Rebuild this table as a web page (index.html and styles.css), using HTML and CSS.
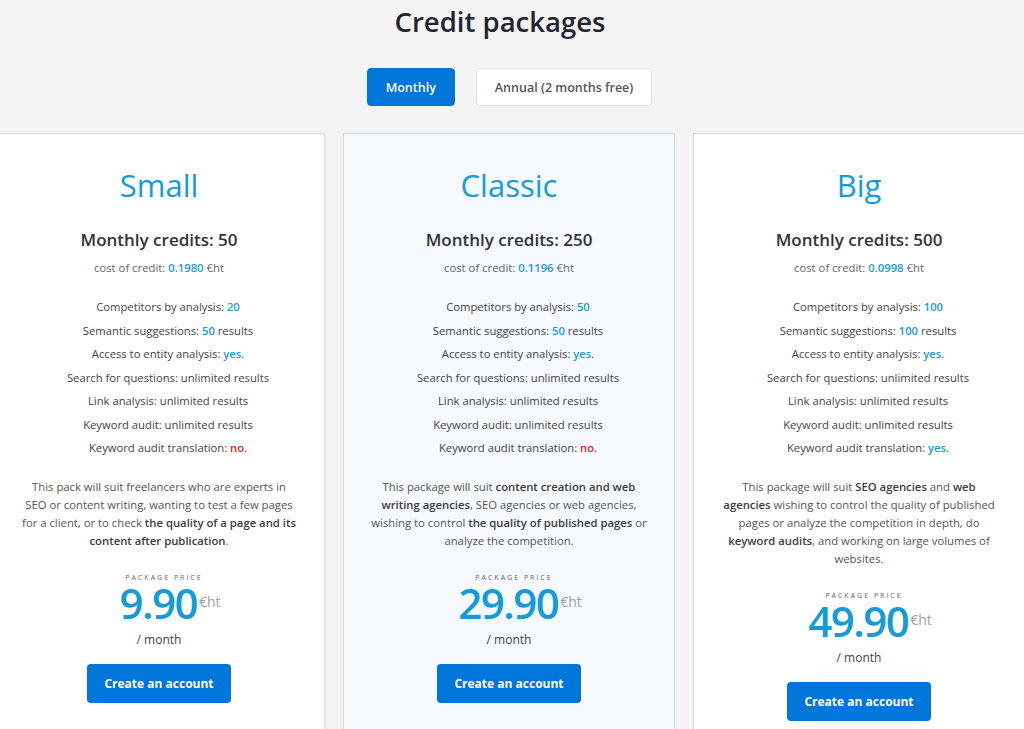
FILE: index.html
```html
<!DOCTYPE html>
<html lang="en">
<head>
  <meta charset="UTF-8" />
  <meta name="viewport" content="width=device-width, initial-scale=1.0" />
  <title>Credit packages</title>
  <link rel="stylesheet" href="styles.css">
</head>
<body>
  <h1 class="page-title">Credit packages</h1>

  <div class="period-toggle">
    <button class="period-btn active">Monthly</button>
    <button class="period-btn">Annual (2 months free)</button>
  </div>

  <div class="packages">
    <div class="package">
      <h2>Small</h2>
      <div class="credits">Monthly credits: 50</div>
      <div class="cost">cost of credit: <span class="hl">0.1980</span> €ht</div>
      <ul class="features">
        <li>Competitors by analysis: <span class="hl">20</span></li>
        <li>Semantic suggestions: <span class="hl">50</span> results</li>
        <li>Access to entity analysis: <span class="hl">yes</span>.</li>
        <li>Search for questions: unlimited results</li>
        <li>Link analysis: unlimited results</li>
        <li>Keyword audit: unlimited results</li>
        <li>Keyword audit translation: <span class="no">no</span>.</li>
      </ul>
      <p class="desc">This pack will suit freelancers who are experts in SEO or content writing, wanting to test a few pages for a client, or to check <b>the quality of a page and its content after publication</b>.</p>
      <div class="price-label">Package price</div>
      <div class="price">9.90<sup>€ht</sup></div>
      <div class="per">/ month</div>
      <button class="signup">Create an account</button>
    </div>

    <div class="package featured">
      <h2>Classic</h2>
      <div class="credits">Monthly credits: 250</div>
      <div class="cost">cost of credit: <span class="hl">0.1196</span> €ht</div>
      <ul class="features">
        <li>Competitors by analysis: <span class="hl">50</span></li>
        <li>Semantic suggestions: <span class="hl">50</span> results</li>
        <li>Access to entity analysis: <span class="hl">yes</span>.</li>
        <li>Search for questions: unlimited results</li>
        <li>Link analysis: unlimited results</li>
        <li>Keyword audit: unlimited results</li>
        <li>Keyword audit translation: <span class="no">no</span>.</li>
      </ul>
      <p class="desc">This package will suit <b>content creation and web writing agencies</b>, SEO agencies or web agencies, wishing to control <b>the quality of published pages</b> or analyze the competition.</p>
      <div class="price-label">Package price</div>
      <div class="price">29.90<sup>€ht</sup></div>
      <div class="per">/ month</div>
      <button class="signup">Create an account</button>
    </div>

    <div class="package">
      <h2>Big</h2>
      <div class="credits">Monthly credits: 500</div>
      <div class="cost">cost of credit: <span class="hl">0.0998</span> €ht</div>
      <ul class="features">
        <li>Competitors by analysis: <span class="hl">100</span></li>
        <li>Semantic suggestions: <span class="hl">100</span> results</li>
        <li>Access to entity analysis: <span class="hl">yes</span>.</li>
        <li>Search for questions: unlimited results</li>
        <li>Link analysis: unlimited results</li>
        <li>Keyword audit: unlimited results</li>
        <li>Keyword audit translation: <span class="hl">yes</span>.</li>
      </ul>
      <p class="desc">This package will suit <b>SEO agencies</b> and <b>web agencies</b> wishing to control the quality of published pages or analyze the competition in depth, do <b>keyword audits</b>, and working on large volumes of websites.</p>
      <div class="price-label">Package price</div>
      <div class="price">49.90<sup>€ht</sup></div>
      <div class="per">/ month</div>
      <button class="signup">Create an account</button>
    </div>
  </div>
</body>
</html>
```

FILE: styles.css
```css
body {
  margin: 0; background: #f4f4f4; color: #444;
  font-family: "Open Sans", Arial, sans-serif;
  overflow: hidden; height: 729px;
}
.page-title {
  margin: 0 0 0 -24px; padding-top: 3px; text-align: center;
  font-size: 27.5px; font-weight: 600; line-height: 38px; color: #1f2333;
}
.period-toggle {
  display: flex; justify-content: center; gap: 21px;
  margin-top: 27px; margin-left: -5px;
}
.period-btn {
  height: 38px; padding: 0 18px; border-radius: 4px;
  border: 1px solid #e2e2e2; background: #fff; color: #555;
  font-family: inherit; font-size: 12.5px; font-weight: 600; cursor: pointer;
}
.period-btn.active { background: #0075da; border-color: #0075da; color: #fff; }
.packages {
  display: flex; gap: 18px; margin-top: 27px; margin-left: -7px; width: 1040px;
}
.package {
  flex: 0 0 332px; box-sizing: border-box; height: 620px;
  background: #fff; border: 1px solid #dcdcdc;
  box-shadow: 0 0 3px rgba(0,0,0,0.06);
  padding: 32px 26px 0; text-align: center;
  display: flex; flex-direction: column; align-items: center;
}
.package.featured { background: #f6f9fe; }
.package h2 {
  margin: 0; font-size: 31px; font-weight: 500; line-height: 38px; color: #169bd9;
}
.credits {
  margin-top: 24px; font-size: 17px; font-weight: 600; line-height: 24px; color: #333;
}
.cost { margin-top: 8px; font-size: 11.3px; line-height: 16px; color: #666; }
.hl { color: #1a9ad8; font-weight: 600; }
.no { color: #e0262c; font-weight: 600; }
.features {
  list-style: none; margin: 19px 0 0; padding: 0 0 0 18px;
  font-size: 11.25px; line-height: 23.5px; color: #444;
}
.desc {
  margin: 18px 0 0; font-size: 11.3px; line-height: 18px; color: #555;
}
.desc b { font-weight: 600; color: #3d3d3d; }
.price-label {
  margin: 23px 0 0 10px; font-size: 7px; line-height: 10px; letter-spacing: 2px;
  text-transform: uppercase; color: #666;
}
.price {
  font-size: 42px; font-weight: 600; line-height: 40px; color: #169bd9;
  letter-spacing: -1.5px; margin-left: 22px;
}
.price sup {
  font-size: 14px; font-weight: 400; color: #a0a0a0; letter-spacing: 0;
  vertical-align: top; position: relative; top: -1px; margin-left: 2px;
}
.per { margin-top: 9px; font-size: 12px; line-height: 16px; color: #444; }
.signup {
  margin-top: 16px; width: 144px; height: 39px; border: none; border-radius: 4px;
  background: #0075da; color: #fff; font-family: inherit; font-size: 12px;
  font-weight: 700; cursor: pointer;
}
```
